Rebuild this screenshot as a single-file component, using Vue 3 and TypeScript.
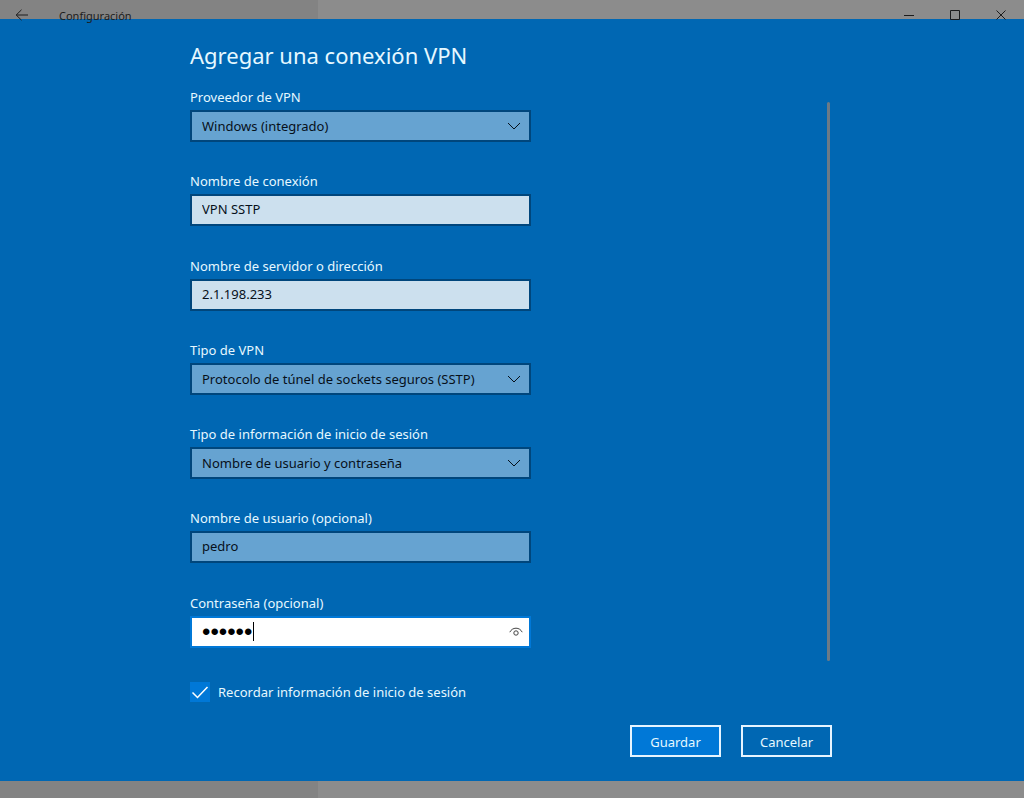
<script setup lang="ts">
import { ref } from 'vue'

interface Field {
  id: string
  label: string
  kind: 'select' | 'text' | 'password'
  value: string
  tone: 'mid' | 'light' | 'focus'
}

const fields = ref<Field[]>([
  { id: 'provider', label: 'Proveedor de VPN', kind: 'select', value: 'Windows (integrado)', tone: 'mid' },
  { id: 'name', label: 'Nombre de conexión', kind: 'text', value: 'VPN SSTP', tone: 'light' },
  { id: 'server', label: 'Nombre de servidor o dirección', kind: 'text', value: '2.1.198.233', tone: 'light' },
  { id: 'type', label: 'Tipo de VPN', kind: 'select', value: 'Protocolo de túnel de sockets seguros (SSTP)', tone: 'mid' },
  { id: 'auth', label: 'Tipo de información de inicio de sesión', kind: 'select', value: 'Nombre de usuario y contraseña', tone: 'mid' },
  { id: 'user', label: 'Nombre de usuario (opcional)', kind: 'text', value: 'pedro', tone: 'mid' },
  { id: 'password', label: 'Contraseña (opcional)', kind: 'password', value: 'abcdef', tone: 'focus' },
])
const remember = ref(true)
const revealed = ref(false)
</script>

<template>
  <div class="window">
    <header class="titlebar">
      <button class="back" type="button" aria-label="Atrás">
        <svg width="14" height="12" viewBox="0 0 14 12"><path d="M6.5 .8 1.2 6l5.3 5.2M1.2 6H13" /></svg>
      </button>
      <span class="app-name">Configuración</span>
      <div class="controls">
        <button type="button" aria-label="Minimizar">
          <svg width="12" height="12" viewBox="0 0 12 12"><path d="M1 6.5h10" /></svg>
        </button>
        <button type="button" aria-label="Maximizar">
          <svg width="12" height="12" viewBox="0 0 12 12"><path d="M1.5 1.5h9v9h-9z" /></svg>
        </button>
        <button type="button" aria-label="Cerrar">
          <svg width="12" height="12" viewBox="0 0 12 12"><path d="m1.5 1.5 9 9m0-9-9 9" /></svg>
        </button>
      </div>
    </header>

    <main class="dialog">
      <form class="content" @submit.prevent>
        <h1>Agregar una conexión VPN</h1>
        <div class="scroller">
          <div class="fields">
            <div v-for="f in fields" :key="f.id" class="field">
              <label :for="f.id">{{ f.label }}</label>
              <div class="box" :class="f.tone">
                <template v-if="f.kind === 'select'">
                  <select :id="f.id" v-model="f.value">
                    <option>{{ f.value }}</option>
                  </select>
                  <svg class="chevron" width="14" height="8" viewBox="0 0 14 8"><path d="m1 1 6 6 6-6" /></svg>
                </template>
                <template v-else-if="f.kind === 'password'">
                  <input :id="f.id" v-model="f.value" :type="revealed ? 'text' : 'password'" :class="{ secret: !revealed }" />
                  <span class="caret"></span>
                  <button class="reveal" type="button" aria-label="Mostrar contraseña" @click="revealed = !revealed">
                    <svg width="14" height="10" viewBox="0 0 14 10">
                      <path d="M.8 5.2C2 2.700 4.300 1.200 7 1.200s5 1.500 6.200 4" />
                      <circle cx="7" cy="6" r="2.200" />
                    </svg>
                  </button>
                </template>
                <input v-else :id="f.id" v-model="f.value" type="text" />
              </div>
            </div>
            <label class="remember">
              <span class="tick">
                <input v-model="remember" type="checkbox" />
                <svg v-if="remember" width="20" height="20" viewBox="0 0 20 20"><path d="m2.500 10.500 5 5L17.500 5" /></svg>
              </span>
              <span>Recordar información de inicio de sesión</span>
            </label>
          </div>
          <div class="track"></div>
        </div>
        <footer>
          <button class="primary" type="submit">Guardar</button>
          <button type="button">Cancelar</button>
        </footer>
      </form>
    </main>
    <div class="below"></div>
  </div>
</template>

<style>
body {
  margin: 0;
}
</style>

<style scoped>
* {
  box-sizing: border-box;
}

.window {
  display: flex;
  flex-direction: column;
  min-height: 100vh;
  background: linear-gradient(90deg, #838383 31.1%, #8c8c8c 31.1%);
  font-family: "Noto Sans", "Open Sans", sans-serif;
  font-size: 13px;
  line-height: 18px;
  color: #e6f8ff;
}

button,
input,
select {
  font: inherit;
  color: inherit;
  margin: 0;
}

svg {
  display: block;
  fill: none;
  stroke: currentColor;
}

.titlebar {
  position: relative;
  z-index: 1;
  display: flex;
  align-items: flex-start;
  height: 19px;
  color: #1c1c1c;
}

.titlebar button {
  display: flex;
  justify-content: center;
  padding: 9px 0 0;
  border: 0;
  background: none;
}

.titlebar .back {
  width: 44px;
}

.app-name {
  padding: 8px 0 0 15px;
  font-size: 11px;
  line-height: 16px;
}

.controls {
  display: flex;
  margin-left: auto;
}

.controls button {
  width: 46px;
}

.dialog {
  flex: 1;
  display: flex;
  justify-content: center;
  padding: 20px 16px 24px;
  background: #0067b3;
}

.content {
  display: flex;
  flex-direction: column;
  width: 100%;
  max-width: 644px;
}

h1 {
  margin: 0 0 17px;
  font-size: 22px;
  line-height: 32px;
  font-weight: 400;
}

.scroller {
  flex: 1;
  display: flex;
  justify-content: space-between;
}

.fields {
  display: flex;
  flex-direction: column;
  justify-content: space-between;
  width: 341px;
}

.field {
  display: flex;
  flex-direction: column;
  gap: 4px;
}

.box {
  position: relative;
  height: 32px;
  border: 2px solid #00467c;
  color: #06101a;
}

.mid {
  background: #66a3d1;
}

.light {
  background: #cce0ee;
}

.focus {
  border-color: #0078d7;
  background: #fff;
  color: #000;
}

.box input,
.box select {
  display: block;
  width: 100%;
  height: 100%;
  padding: 0 10px 2px;
  border: 0;
  outline: 0;
  border-radius: 0;
  background: none;
  appearance: none;
}

.box select {
  padding-bottom: 0;
}

.box .secret {
  padding-bottom: 0;
  font-family: "Liberation Sans", sans-serif;
  font-size: 24px;
}

.chevron {
  position: absolute;
  top: 10px;
  right: 8px;
  pointer-events: none;
}

.caret {
  position: absolute;
  top: 4px;
  left: 61px;
  width: 1px;
  height: 19px;
  background: #000;
}

.reveal {
  position: absolute;
  top: 9px;
  right: 6px;
  padding: 0;
  border: 0;
  background: none;
  color: #444;
}

.remember {
  display: flex;
  align-items: center;
  gap: 8px;
  margin-top: 4px;
}

.tick {
  position: relative;
  width: 20px;
  height: 20px;
}

.tick input {
  display: block;
  width: 20px;
  height: 20px;
  appearance: none;
  background: #0078d7;
}

.tick svg {
  position: absolute;
  inset: 0;
  stroke: #fff;
  stroke-width: 1.5;
  pointer-events: none;
}

.track {
  width: 3px;
  margin: 14px 4px 41px 0;
  border-radius: 2px;
  background: #6c7a86;
}

footer {
  display: flex;
  justify-content: flex-end;
  gap: 20px;
  padding: 23px 2px 0 0;
}

footer button {
  width: 91px;
  height: 32px;
  padding: 2px 0 0;
  border: 2px solid #e6f4ff;
  background: #0067b3;
}

footer .primary {
  background: #0078d7;
}

.below {
  height: 17px;
}
</style>
